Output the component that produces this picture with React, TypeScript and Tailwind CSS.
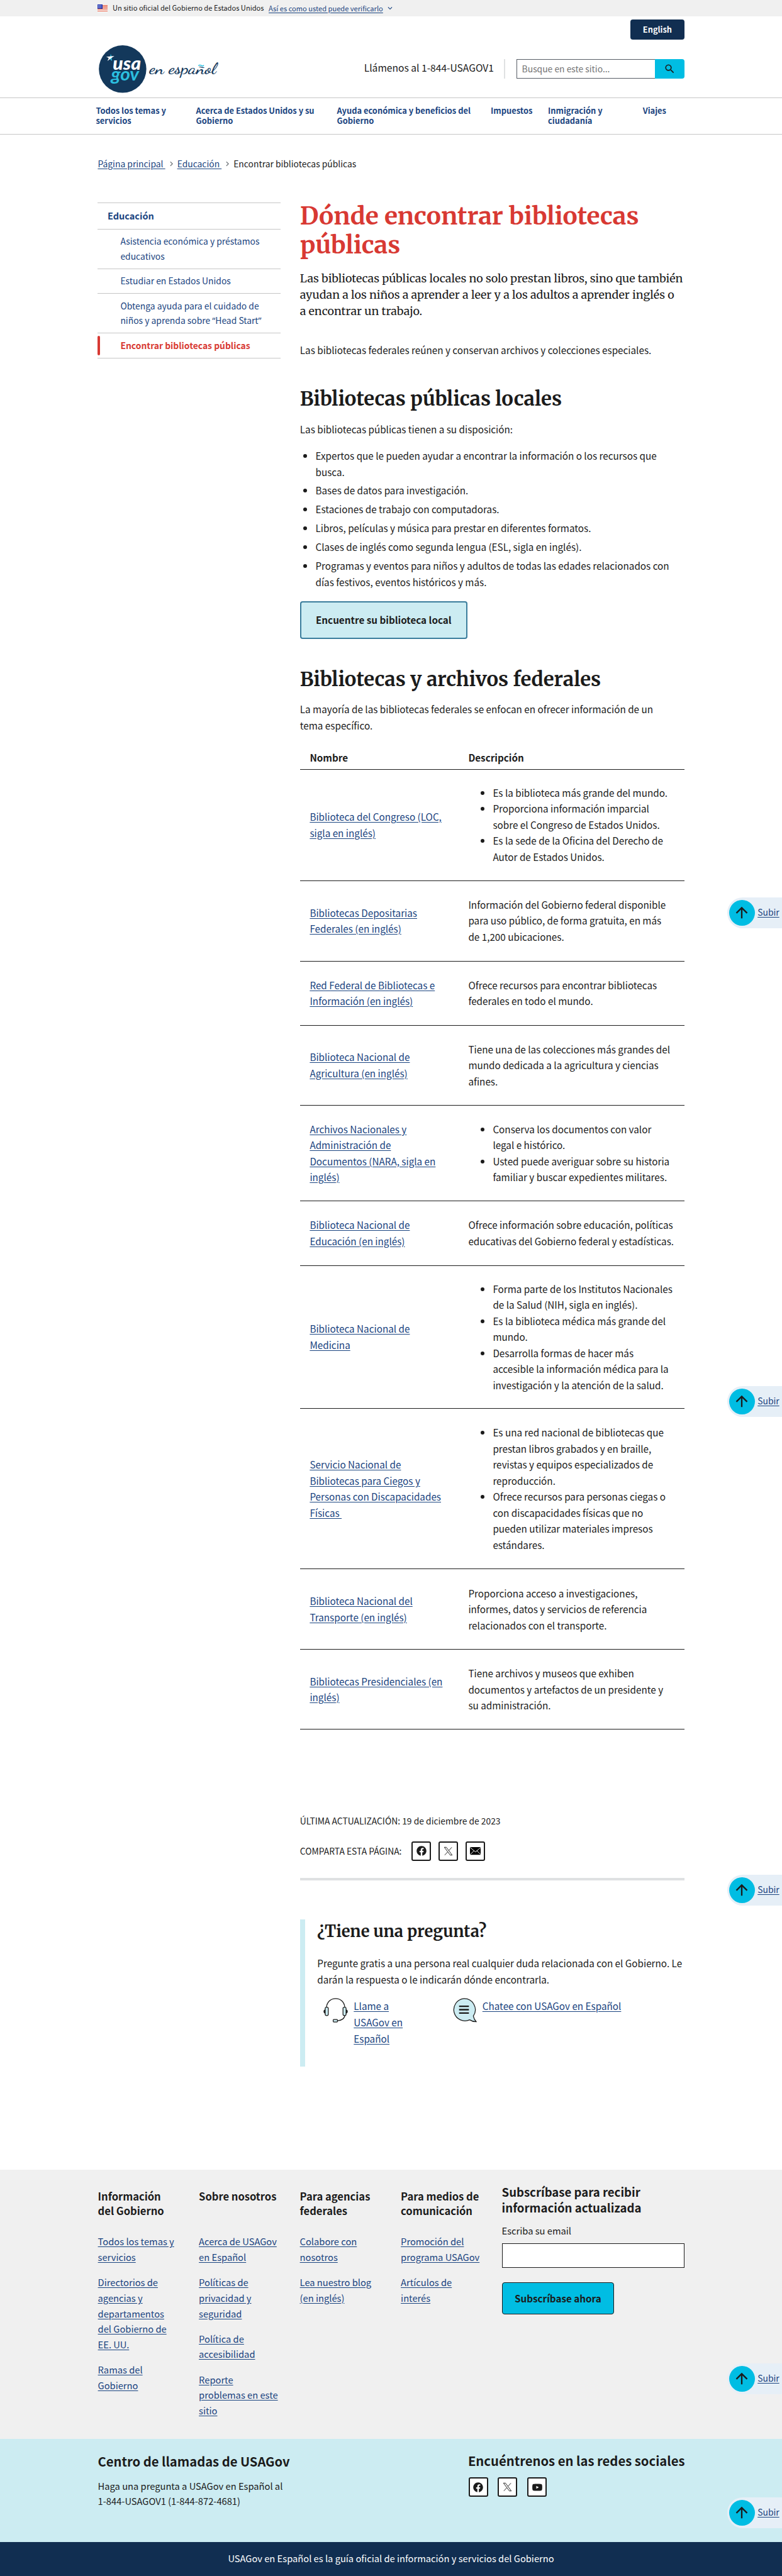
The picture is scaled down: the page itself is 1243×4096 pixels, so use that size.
import type { ReactNode } from "react";
import { FaFacebook } from "react-icons/fa";
import { MdArrowUpward, MdSearch, MdExpandMore, MdNavigateNext } from "react-icons/md";
import { AiFillYoutube } from "react-icons/ai";

const serif = "font-['Merriweather','Noto_Serif','DejaVu_Serif_Condensed',serif]";

function Flag() {
  return (
    <svg viewBox="0 0 16 12" className="h-[12px] w-[15.5px]" shapeRendering="crispEdges">
      <rect width="16" height="12" fill="#fff" />
      {[0, 2, 4, 6, 8, 10].map((y) => (
        <rect key={y} y={y + 0.6} width="16" height="1" fill="#db3e1f" />
      ))}
      <rect width="8" height="7" fill="#1e33b1" />
      {[1, 3, 5].map((y) => [1, 3, 5].map((x) => <rect key={`${x}${y}`} x={x + 0.5} y={y} width="0.8" height="0.8" fill="#fff" />))}
    </svg>
  );
}

function Logo() {
  return (
    <svg viewBox="0 0 196 78" className="h-[75.7px] w-[190.3px]">
      <circle cx="39" cy="39" r="38.9" fill="#13385b" />
      <text x="23" y="40.3" fontFamily="Lato, sans-serif" fontWeight="900" fontStyle="italic" fontSize="30" textLength="46" lengthAdjust="spacingAndGlyphs" fill="#fff">usa</text>
      <text x="20" y="57.2" fontFamily="Lato, sans-serif" fontWeight="700" fontStyle="italic" fontSize="29" textLength="46" lengthAdjust="spacingAndGlyphs" fill="#2bbfe0">gov</text>
      <path d="M19.5 14 21 18.5 21.5 26 18 22.5Z" fill="#2bbfe0" />
      <path d="M12.2 18.8 25.5 17.6 20.2 21.2 14.2 25.8 16.2 20.8Z" fill="#fff" />
      <text x="83" y="46" fontFamily="'Dancing Script', 'Liberation Serif', cursive" fontWeight="600" fontSize="27" textLength="109" lengthAdjust="spacingAndGlyphs" fill="#13385b">en español</text>
      <path d="M163 33.500q2.500-2 5-.300t4-.700" fill="none" stroke="#2bbfe0" strokeWidth="1.600" />
    </svg>
  );
}

function XIcon() {
  return (
    <svg viewBox="0 0 24 24" className="h-[15px] w-[15px]" fill="none" stroke="#1b1b1b" strokeWidth="1.500">
      <path d="M2 2h5l15 20h-5zM21 2 13.300 10.700M10.600 13.800 3 22" />
    </svg>
  );
}

function MailIcon() {
  return (
    <svg viewBox="0 0 18 13" className="h-[12.600px] w-[17.500px]">
      <rect width="18" height="12.600" rx="1.200" fill="#000" />
      <path d="M.6.8 9 8l8.400-7.200M.6 12 6.600 6M17.400 12l-6-6" fill="none" stroke="#fff" strokeWidth="1" />
    </svg>
  );
}

function Headset() {
  return (
    <svg viewBox="0 0 40 40" className="h-[39px] w-[39px]" fill="none" stroke="#1b1b1b" strokeWidth="1.300">
      <path d="M5 15C6 6 12 .8 20 .8S34 6 35 15" />
      <path d="M35 28c0 5-5 8.600-12 9" />
      <path d="M3.300 18.500C1 19 .3 20.500.3 22s.7 3 3 3.500zM36.700 18.500c2.300.500 3 2 3 3.500s-.700 3-3 3.500z" fill="#1b1b1b" stroke="none" />
      <rect x="3" y="15" width="5" height="13.500" rx="2" fill="#ccecf2" />
      <rect x="32" y="15" width="5" height="13.500" rx="2" fill="#ccecf2" />
      <rect x="16" y="35" width="7" height="4" rx="1" fill="#ccecf2" />
    </svg>
  );
}

function Chat() {
  return (
    <svg viewBox="0 0 40 40" className="h-[39px] w-[39px]" fill="none" stroke="#1b1b1b">
      <path d="M18.800.9a18.200 18.200 0 1 0 9.500 34.600c3 2 6.500 3.300 10.700 3.200-2.200-2.500-4.200-5.800-4.800-9.300A18.200 18.200 0 0 0 18.800.9Z" fill="#ccecf2" strokeWidth="1.300" />
      <path d="M11 13.500h16M11 19h16M11 24.500h16" strokeWidth="2.400" />
    </svg>
  );
}

function IconBox({ children, white = false }: { children: ReactNode; white?: boolean }) {
  return (
    <a className={`flex h-[31px] w-[31px] items-center justify-center rounded-[3px] border-2 border-[#1b1b1b] text-[#1b1b1b] ${white ? "bg-white" : ""}`}>
      {children}
    </a>
  );
}

function ToTop({ className }: { className: string }) {
  return (
    <a className={`absolute right-0 flex h-[48.500px] w-[87.300px] items-center rounded-l-full bg-[#e6eff7] pl-[3px] ${className}`}>
      <span className="flex h-[41.500px] w-[41.500px] shrink-0 items-center justify-center rounded-full bg-[#00bde3]">
        <MdArrowUpward className="h-[28px] w-[28px] text-[#1b1b1b]" />
      </span>
      <span className="ml-[4px] text-[13.880px] text-[#1a4480] underline underline-offset-[2px]">Subir</span>
    </a>
  );
}

const navItems: [string, string][] = [
  ["Todos los temas y servicios", "w-[159px] pr-[35px]"],
  ["Acerca de Estados Unidos y su Gobierno", "w-[224px] pr-[25px]"],
  ["Ayuda económica y beneficios del Gobierno", "w-[244.500px] pr-[25px]"],
  ["Impuestos", "w-[91px]"],
  ["Inmigración y ciudadanía", "w-[150.700px] pr-[50px]"],
  ["Viajes", "w-[60px]"],
];

const sideItems: ReactNode[] = [
  "Asistencia económica y préstamos educativos",
  "Estudiar en Estados Unidos",
  <>
    Obtenga ayuda para el cuidado de niños y aprenda sobre <span className="font-['Noto_Sans'] whitespace-nowrap">“<span className="font-['Noto_Sans_CJK_SC']">Head Start</span>”</span>
  </>,
];

const services = [
  "Expertos que le pueden ayudar a encontrar la información o los recursos que busca.",
  "Bases de datos para investigación.",
  "Estaciones de trabajo con computadoras.",
  "Libros, películas y música para prestar en diferentes formatos.",
  "Clases de inglés como segunda lengua (ESL, sigla en inglés).",
  "Programas y eventos para niños y adultos de todas las edades relacionados con días festivos, eventos históricos y más.",
];

const rows: { name: string; text?: string; list?: string[]; h: string }[] = [
  { name: "Biblioteca del Congreso (LOC, sigla en inglés)", h: "h-[176.800px]", list: ["Es la biblioteca más grande del mundo.", "Proporciona información imparcial sobre el Congreso de Estados Unidos.", "Es la sede de la Oficina del Derecho de Autor de Estados Unidos."] },
  { name: "Bibliotecas Depositarias Federales (en inglés)", h: "h-[128.200px]", text: "Información del Gobierno federal disponible para uso público, de forma gratuita, en más de 1,200 ubicaciones." },
  { name: "Red Federal de Bibliotecas e Información (en inglés)", h: "h-[102px]", text: "Ofrece recursos para encontrar bibliotecas federales en todo el mundo." },
  { name: "Biblioteca Nacional de Agricultura (en inglés)", h: "h-[127.300px]", text: "Tiene una de las colecciones más grandes del mundo dedicada a la agricultura y ciencias afines." },
  { name: "Archivos Nacionales y Administración de Documentos (NARA, sigla en inglés)", h: "h-[152.200px]", list: ["Conserva los documentos con valor legal e histórico.", "Usted puede averiguar sobre su historia familiar y buscar expedientes militares."] },
  { name: "Biblioteca Nacional de Educación (en inglés)", h: "h-[102.300px]", text: "Ofrece información sobre educación, políticas educativas del Gobierno federal y estadísticas." },
  { name: "Biblioteca Nacional de Medicina", h: "h-[227.800px]", list: ["Forma parte de los Institutos Nacionales de la Salud (NIH, sigla en inglés).", "Es la biblioteca médica más grande del mundo.", "Desarrolla formas de hacer más accesible la información médica para la investigación y la atención de la salud."] },
  { name: "Servicio Nacional de Bibliotecas para Ciegos y Personas con Discapacidades Físicas\u00a0", h: "h-[255.100px]", list: ["Es una red nacional de bibliotecas que prestan libros grabados y en braille, revistas y equipos especializados de reproducción.", "Ofrece recursos para personas ciegas o con discapacidades físicas que no pueden utilizar materiales impresos estándares."] },
  { name: "Biblioteca Nacional del Transporte (en inglés)", h: "h-[127.800px]", text: "Proporciona acceso a investigaciones, informes, datos y servicios de referencia relacionados con el transporte." },
  { name: "Bibliotecas Presidenciales (en inglés)", h: "h-[127.200px]", text: "Tiene archivos y museos que exhiben documentos y artefactos de un presidente y su administración." },
];

const footerCols: { title: string; links: string[] }[] = [
  { title: "Información del Gobierno", links: ["Todos los temas y servicios", "Directorios de agencias y departamentos del Gobierno de EE. UU.", "Ramas del Gobierno"] },
  { title: "Sobre nosotros", links: ["Acerca de USAGov en Español", "Políticas de privacidad y seguridad", "Política de accesibilidad", "Reporte problemas en este sitio"] },
  { title: "Para agencias federales", links: ["Colabore con nosotros", "Lea nuestro blog (en inglés)"] },
  { title: "Para medios de comunicación", links: ["Promoción del programa USAGov", "Artículos de interés"] },
];

const link = "text-[#1a4480] underline underline-offset-[2px]";

export default function App() {
  return (
    <div className="relative flex h-[4096px] w-[1243px] flex-col overflow-hidden bg-white font-['Noto_Sans_CJK_SC','Noto_Sans',sans-serif] text-[15.260px] leading-[25.650px] text-[#1b1b1b]">
      <div className="flex h-[26px] shrink-0 items-center bg-[#f0f0f0] pl-[155.400px] text-[11.120px] leading-[16px]">
        <Flag />
        <span className="ml-[8px] -mt-[3px]">Un sitio oficial del Gobierno de Estados Unidos</span>
        <a className={`ml-[7.500px] -mt-px ${link}`}>Así es como usted puede verificarlo</a>
        <MdExpandMore className="ml-[4px] h-[14px] w-[14px] text-[#1a4480]" />
      </div>

      <header className="flex h-[129px] shrink-0 flex-col pr-[155.400px] pl-[155.400px]">
        <button className="mt-[5px] h-[32px] w-[85.400px] self-end rounded-[4px] bg-[#112e51] text-[12.800px] font-bold text-white">English</button>
        <div className="flex pt-[9px]">
          <div className="ml-[1.500px] w-[421.800px]"><Logo /></div>
          <div className="mt-[22px] flex h-[31px] flex-1">
            <span className="pt-px text-[15.610px] whitespace-nowrap">Llámenos al 1-844-USAGOV1</span>
            <span className="ml-auto w-[2px] bg-[#dfe1e2]" />
            <div className="ml-[17.500px] flex w-[220px] items-center border border-r-0 border-[#565c65] pl-[8px] text-[13.860px] text-[#757575]">Busque en este sitio...</div>
            <span className="flex w-[47px] items-center justify-center rounded-r-[4px] bg-[#00bde3]"><MdSearch className="h-[19px] w-[19px] text-[#1b1b1b]" /></span>
          </div>
        </div>
      </header>

      <nav className="flex h-[59px] shrink-0 border-y border-[#c6c6c6] pt-[12px] pl-[152.500px] text-[12.880px] leading-[15.600px] font-bold text-[#1a4480]">
        {navItems.map(([t, c]) => <a key={t} className={c}>{t}</a>)}
      </nav>

      <div className="mt-[36px] flex h-[20px] shrink-0 items-center pl-[155.400px] text-[13.870px] leading-[20px] whitespace-pre">
        <a className={link}>{"Página principal "}</a>
        <MdNavigateNext className="mx-[2px] h-[15px] w-[15px] text-[#71767a]" />
        <a className={link}>{"Educación "}</a>
        <MdNavigateNext className="mx-[2px] h-[15px] w-[15px] text-[#71767a]" />
        <span>Encontrar bibliotecas públicas</span>
      </div>

      <div className="flex h-[3180px] shrink-0 pl-[155.400px]">
        <aside className="mt-[52px] w-[290.300px] text-[13.880px] leading-[23.300px] text-[#1a4480]">
          <div className="h-[41.800px] border-t border-[#c6c6c6] pt-[8px] pl-[15.600px] text-[14.510px] font-bold">Educación</div>
          {sideItems.map((t, i) => <div key={i} className="border-t border-[#c6c6c6] py-[7.650px] pr-[20px] pl-[36px]">{t}</div>)}
          <div className="flex border-y border-[#c6c6c6] py-[4px]">
            <span className="h-[31px] w-[4px] rounded-full bg-[#d83933]" />
            <span className="pt-[4px] pl-[32px] font-bold text-[#d83933]">Encontrar bibliotecas públicas</span>
          </div>
        </aside>

        <main className="ml-[31.100px] w-[610.800px] pt-[51px]">
          <h1 className={`text-[38.800px] leading-[46px] font-bold text-[#d83933] ${serif}`}>Dónde encontrar bibliotecas públicas</h1>
          <p className={`mt-[17.200px] text-[17.870px] leading-[25.700px] ${serif}`}>
            Las bibliotecas públicas locales no solo prestan libros, sino que también ayudan a los niños a aprender a leer y a los adultos a aprender inglés o<br />a encontrar un trabajo.
          </p>
          <p className="mt-[37.200px]">Las bibliotecas federales reúnen y conservan archivos y colecciones especiales.</p>
          <h2 className={`mt-[46px] text-[31.100px] leading-[36px] font-bold ${serif}`}>Bibliotecas públicas locales</h2>
          <p className="mt-[17.800px]">Las bibliotecas públicas tienen a su disposición:</p>
          <ul className="mt-[16.400px] flex list-disc flex-col gap-[4.200px] pr-[10px] pl-[24.700px]">
            {services.map((s) => <li key={s}>{s}</li>)}
          </ul>
          <button className="mt-[18.200px] block h-[60px] w-[266px] rounded-[4px] border-2 border-[#3a7d9c] bg-[#ccecf2] pb-[2px] font-bold">Encuentre su biblioteca local</button>
          <h2 className={`mt-[45.500px] text-[31.100px] leading-[36px] font-bold ${serif}`}>Bibliotecas y archivos federales</h2>
          <p className="mt-[17.100px] pr-[20px]">La mayoría de las bibliotecas federales se enfocan en ofrecer información de un tema específico.</p>

          <table className="mt-[20.500px] w-full table-fixed border-separate border-spacing-0 text-left">
            <thead>
              <tr className="h-[37px] align-bottom leading-[20px]">
                <th className="w-[252px] border-b border-[#1b1b1b] px-[15.600px] pb-[9px]">Nombre</th>
                <th className="border-b border-[#1b1b1b] px-[15.600px] pb-[9px]">Descripción</th>
              </tr>
            </thead>
            <tbody className="leading-[25.550px]">
              {rows.map((r) => (
                <tr key={r.name} className={r.h}>
                  <td className="border-b border-[#1b1b1b] py-0 pr-[15.500px] pl-[15.600px] align-middle"><a className={link}>{r.name}</a></td>
                  <td className="border-b border-[#1b1b1b] py-0 pr-[15.400px] pl-[15.600px] align-middle">
                    {r.list ? <ul className="list-disc pl-[39px]">{r.list.map((l) => <li key={l}>{l}</li>)}</ul> : r.text}
                  </td>
                </tr>
              ))}
            </tbody>
          </table>

          <p className="mt-[134.500px] text-[13.870px] leading-[20px]">ÚLTIMA ACTUALIZACIÓN: 19 de diciembre de 2023</p>
          <div className="mt-[23px] flex items-center text-[13.870px] leading-[20px]">
            <span className="w-[177.700px]">COMPARTA ESTA PÁGINA:</span>
            <div className="flex gap-[11.700px]">
              <IconBox><FaFacebook className="h-[16px] w-[16px]" /></IconBox>
              <IconBox><XIcon /></IconBox>
              <IconBox><MailIcon /></IconBox>
            </div>
          </div>
          <hr className="mt-[27px] h-[4px] border-0 bg-[#dfe1e2]" />

          <section className="mt-[62px] h-[234px] border-l-[8px] border-[#ccecf2] pt-[3px] pl-[19.500px]">
            <h2 className={`text-[25.420px] leading-[32px] font-bold ${serif}`}>¿Tiene una pregunta?</h2>
            <p className="mt-[22.500px] mr-[-5px]">Pregunte gratis a una persona real cualquier duda relacionada con el Gobierno. Le darán la respuesta o le indicarán dónde encontrarla.</p>
            <div className="mt-[16.500px] flex pl-[9.500px] leading-[25.800px]">
              <Headset />
              <a className={`ml-[9.500px] w-[96px] ${link}`}>Llame a USAGov en Español</a>
              <div className="ml-[61px] flex">
                <Chat />
                <a className={`ml-[8.500px] ${link}`}>Chatee con USAGov en Español</a>
              </div>
            </div>
          </section>
        </main>
      </div>

      <footer className="flex flex-1 flex-col text-[14.700px] leading-[24.700px]">
        <div className="flex h-[427.600px] bg-[#f0f0f0] pl-[155.600px]">
          {footerCols.map((c) => (
            <div key={c.title} className="w-[160.500px] pt-[31px]">
              <h3 className="h-[45.200px] w-[125px] text-[16.570px] leading-[22.600px] font-bold">{c.title}</h3>
              <ul className="mt-[26px] flex w-[129px] flex-col gap-[15.500px]">
                {c.links.map((l) => <li key={l}><a className={link}>{l}</a></li>)}
              </ul>
            </div>
          ))}
          <form className="w-[290px] pt-[21.500px]">
            <h3 className="w-[250px] text-[18.590px] leading-[25.400px] font-bold">Subscríbase para recibir información actualizada</h3>
            <label className="mt-[12.500px] block">Escriba su email</label>
            <div className="mt-[7.500px] h-[39px] border border-[#1b1b1b] bg-white" />
            <button className="mt-[23px] block h-[50.500px] w-[178.600px] rounded-[4px] border border-[#1b1b1b] bg-[#00bde3] text-[15.260px] font-bold">Subscríbase ahora</button>
          </form>
        </div>
        <div className="flex h-[164px] bg-[#ccecf2] pl-[155.600px]">
          <div className="w-[588.300px] pt-[21px]">
            <h3 className="text-[20.200px] leading-[30px] font-bold">Centro de llamadas de USAGov</h3>
            <p className="mt-[12px]">Haga una pregunta a USAGov en Español al<br />1-844-USAGOV1 (1-844-872-4681)</p>
          </div>
          <div className="pt-[19px]">
            <h3 className="text-[20.260px] leading-[30px] font-bold">Encuéntrenos en las redes sociales</h3>
            <div className="mt-[12.500px] flex gap-[15.600px] pl-px">
              <IconBox white><FaFacebook className="h-[16px] w-[16px]" /></IconBox>
              <IconBox white><XIcon /></IconBox>
              <IconBox white><AiFillYoutube className="h-[18px] w-[18px]" /></IconBox>
            </div>
          </div>
        </div>
        <div className="flex flex-1 items-center justify-center bg-[#112e51] text-white">USAGov en Español es la guía oficial de información y servicios del Gobierno</div>
      </footer>

      <ToTop className="top-[1427px]" />
      <ToTop className="top-[2204px]" />
      <ToTop className="top-[2981px]" />
      <ToTop className="top-[3758px]" />
      <ToTop className="top-[3971px]" />
    </div>
  );
}
